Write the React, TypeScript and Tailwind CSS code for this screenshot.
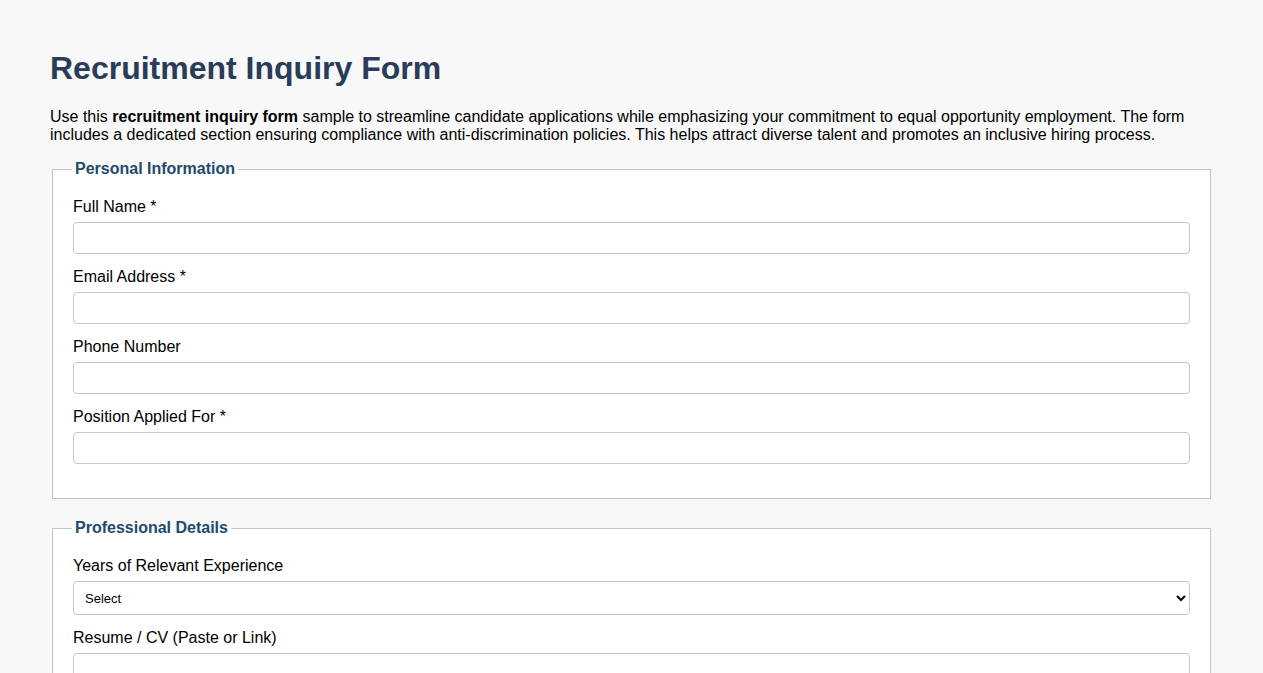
import React from "react";

const font = { fontFamily: '"Liberation Sans", Arial, sans-serif' };

function Field({ label, children }: { label: string; children?: React.ReactNode }) {
  return (
    <div className="mb-[14px]">
      <label className="block mb-[6px] text-[16px] leading-[18px] text-black">{label}</label>
      {children ?? (
        <input
          type="text"
          className="block w-full h-[32px] border border-[#c6c6c9] rounded-[4px] bg-white px-2 text-[16px] outline-none"
        />
      )}
    </div>
  );
}

function Section({ title, children }: { title: string; children: React.ReactNode }) {
  return (
    <fieldset className="border border-[#c4c4c8] bg-white mb-[20px] mx-[2px] px-[20px] pt-[20px] pb-[20px]">
      <legend className="px-[3px] -ml-[1px] text-[16px] leading-[18px] font-bold text-[#1f4a6b]">{title}</legend>
      {children}
    </fieldset>
  );
}

export default function App() {
  return (
    <div className="min-h-screen bg-[#f8f8f9] px-[50px] pt-[50px] pb-[40px] text-black" style={font}>
      <h1 className="text-[32px] leading-[37px] font-bold text-[#293c58] mb-[21px]">Recruitment Inquiry Form</h1>
      <p className="text-[16px] leading-[18px] mb-[16px]">
        Use this <strong>recruitment inquiry form</strong> sample to streamline candidate applications while emphasizing your commitment to equal opportunity employment. The form includes a dedicated section ensuring compliance with anti-discrimination policies. This helps attract diverse talent and promotes an inclusive hiring process.
      </p>
      <form>
        <Section title="Personal Information">
          <Field label="Full Name *" />
          <Field label="Email Address *" />
          <Field label="Phone Number" />
          <Field label="Position Applied For *" />
        </Section>
        <Section title="Professional Details">
          <Field label="Years of Relevant Experience">
            <select className="block w-full h-[34px] border border-[#c6c6c9] rounded-[4px] bg-white pl-[7px] pr-2 text-[13px] outline-none">
              <option>Select</option>
              <option>0-1 years</option>
              <option>2-5 years</option>
              <option>6-10 years</option>
              <option>10+ years</option>
            </select>
          </Field>
          <Field label="Resume / CV (Paste or Link)">
            <textarea className="block w-full h-[100px] border border-[#c6c6c9] rounded-[4px] bg-white px-2 text-[16px] outline-none" />
          </Field>
        </Section>
      </form>
    </div>
  );
}
